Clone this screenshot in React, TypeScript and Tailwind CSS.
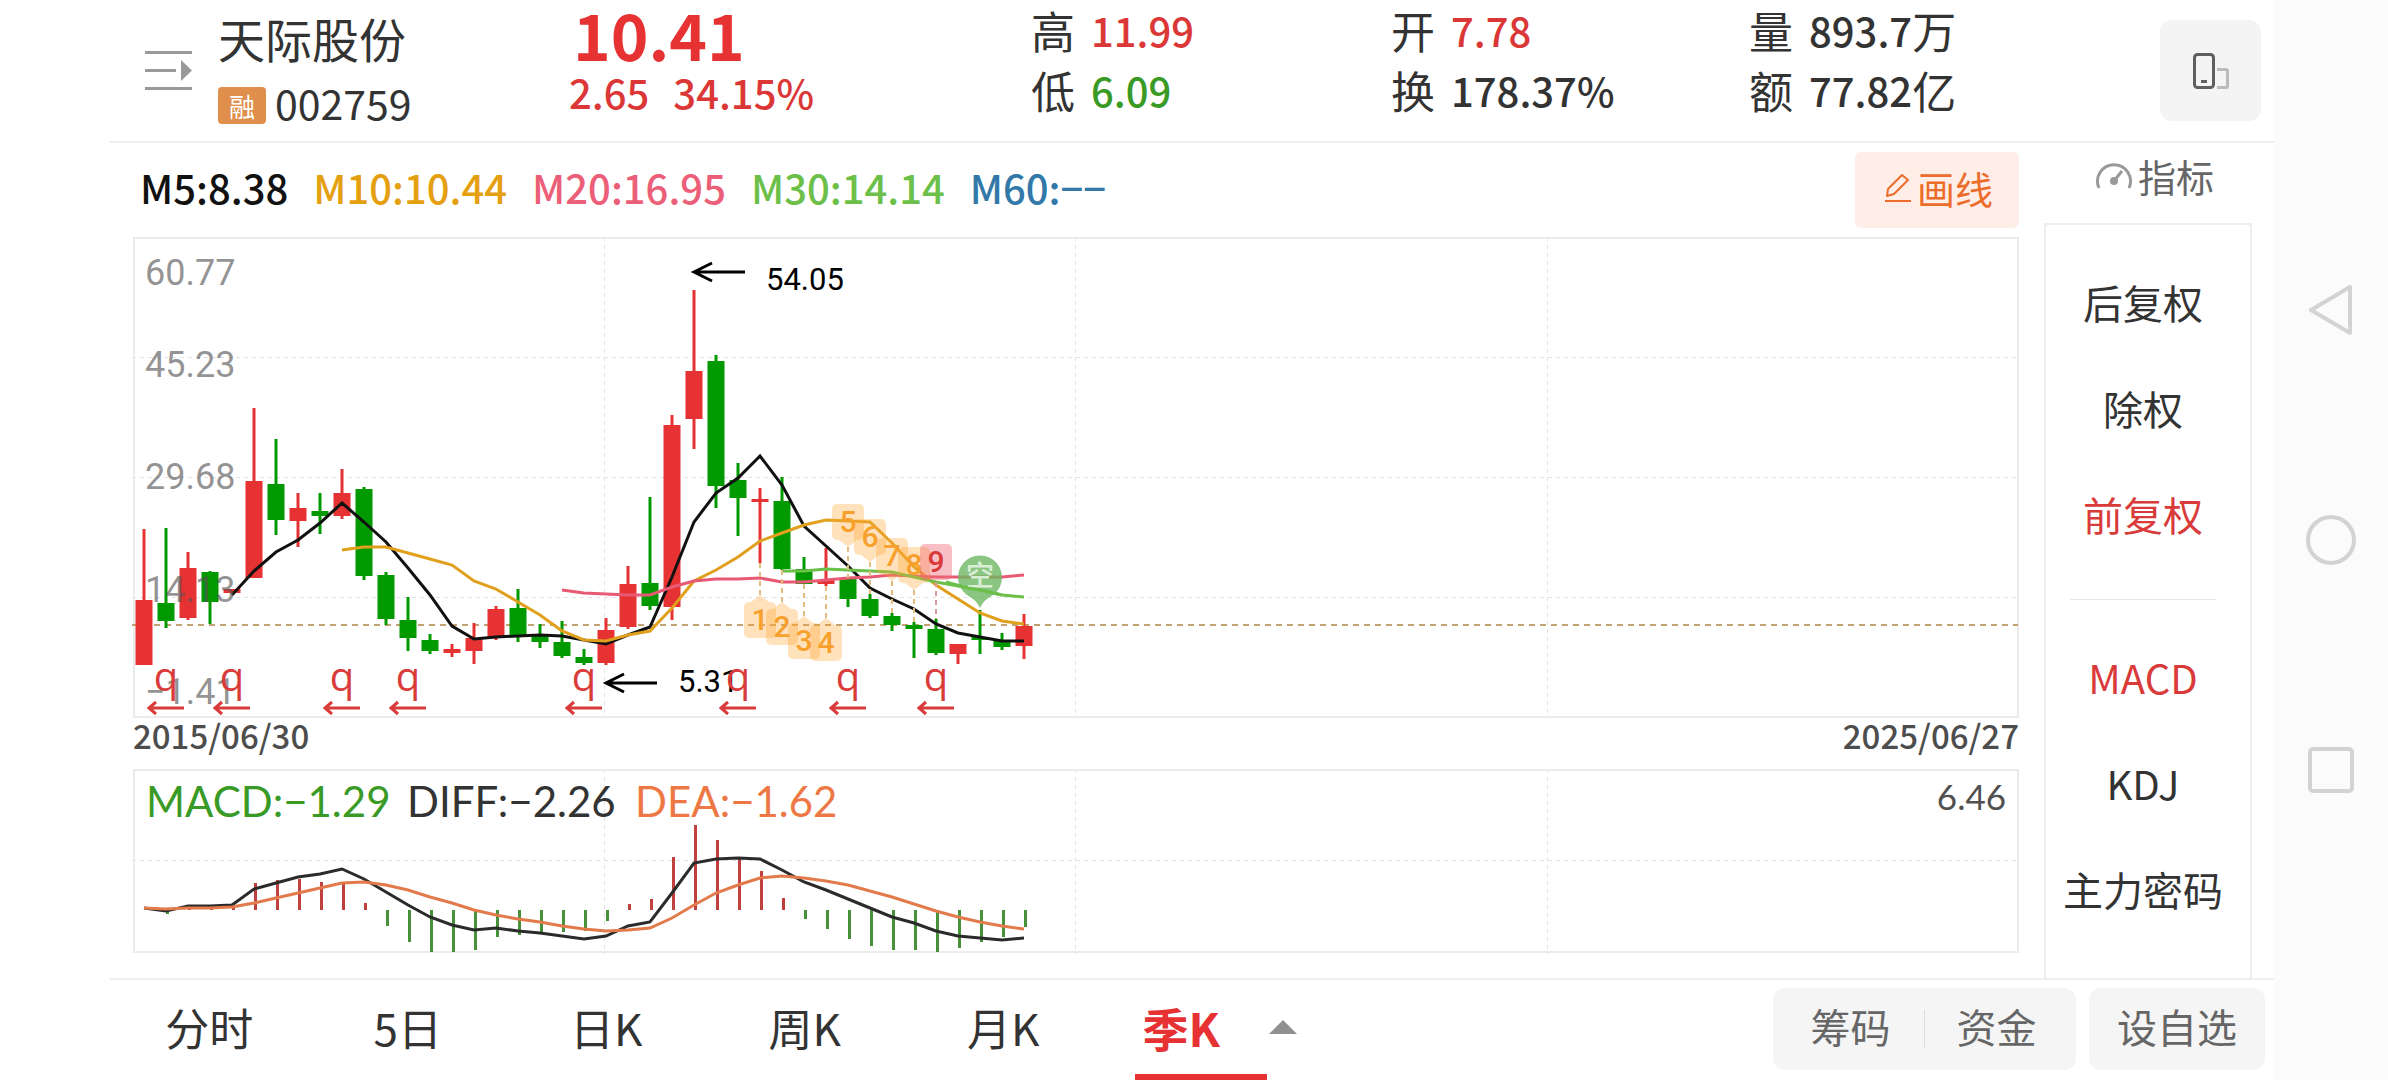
import { clsx } from "clsx";

const RED = "#e63232";
const GREEN = "#009900";

const STEP = 22; // distance between two candles
const LEFT = 12;
const cx = (i: number) => LEFT + i * STEP;

// [color, high, body top, body bottom, low]
type Candle = ["r" | "g", number, number, number, number];

const candles: Candle[] = [
  ["r", 292, 363, 428, 428],
  ["g", 291, 366, 384, 391],
  ["r", 315, 331, 381, 383],
  ["g", 334, 335, 365, 387],
  ["r", 352, 352, 356, 356],
  ["r", 171, 244, 341, 341],
  ["g", 202, 247, 283, 298],
  ["r", 256, 271, 284, 310],
  ["g", 256, 274, 279, 297],
  ["r", 232, 256, 279, 282],
  ["g", 250, 252, 339, 343],
  ["g", 335, 338, 382, 388],
  ["g", 360, 383, 401, 414],
  ["g", 397, 403, 414, 417],
  ["r", 407, 412, 416, 420],
  ["r", 386, 401, 414, 427],
  ["r", 369, 372, 401, 403],
  ["g", 352, 371, 398, 405],
  ["g", 387, 399, 405, 411],
  ["g", 384, 405, 419, 421],
  ["g", 412, 420, 426, 428],
  ["r", 381, 393, 426, 428],
  ["r", 329, 347, 390, 392],
  ["g", 260, 346, 369, 373],
  ["r", 178, 188, 370, 383],
  ["r", 53, 134, 182, 212],
  ["g", 118, 124, 249, 271],
  ["g", 226, 243, 261, 299],
  ["r", 251, 262, 265, 326],
  ["g", 240, 264, 332, 333],
  ["g", 320, 332, 347, 347],
  ["r", 311, 343, 347, 349],
  ["g", 341, 342, 362, 370],
  ["g", 357, 362, 379, 381],
  ["g", 376, 379, 388, 394],
  ["g", 385, 388, 392, 421],
  ["g", 382, 392, 416, 418],
  ["r", 407, 407, 417, 427],
  ["g", 373, 400, 403, 417],
  ["g", 396, 403, 410, 413],
  ["r", 377, 389, 409, 422],
];

const averages = [
  {
    start: 4,
    color: "#111111",
    ys: [358, 334, 315, 303, 286, 266, 285, 305, 331, 358, 389, 402, 400, 399, 398, 399, 403, 407, 398, 390, 340, 285, 256, 241, 219, 248, 289, 309, 329, 351, 362, 372, 387, 396, 400, 404, 404],
  },
  {
    start: 9,
    color: "#e0a01e",
    ys: [313, 310, 310, 316, 322, 328, 344, 352, 365, 378, 394, 403, 404, 398, 394, 371, 344, 333, 320, 304, 296, 288, 283, 284, 285, 306, 330, 348, 362, 376, 384, 387],
  },
  {
    start: 19,
    color: "#e85a73",
    ys: [353, 356, 357, 358, 358, 350, 344, 342, 342, 341, 345, 345, 343, 341, 340, 338, 339, 340, 340, 340, 340, 338],
  },
  {
    start: 29,
    color: "#6cc04a",
    ys: [334, 334, 332, 333, 334, 335, 340, 345, 349, 353, 358, 360],
  },
];

const priceLabels = [
  { text: "60.77", y: 48 },
  { text: "45.23", y: 140 },
  { text: "29.68", y: 252 },
  { text: "14.13", y: 365 },
  { text: "-1.41", y: 467 },
];

const dividends = [1, 4, 9, 12, 20, 27, 32, 36];

// countdown badges, `from` / `to` is the dotted connector
const badges = [
  { n: 1, i: 28, top: 365, from: 326, to: 358, up: true },
  { n: 2, i: 29, top: 372, from: 333, to: 365, up: true },
  { n: 3, i: 30, top: 386, from: 347, to: 379, up: true },
  { n: 4, i: 31, top: 388, from: 349, to: 381, up: true },
  { n: 5, i: 32, top: 267, from: 310, to: 341, up: false },
  { n: 6, i: 33, top: 282, from: 325, to: 357, up: false },
  { n: 7, i: 34, top: 301, from: 344, to: 376, up: false },
  { n: 8, i: 35, top: 310, from: 353, to: 385, up: false },
  { n: 9, i: 36, top: 307, from: 345, to: 382, up: false },
];

const MACD_ZERO = 141;
const macdBars = [
  141, 145, 139, 139, 139, 114, 111, 110, 113, 115, 134, 157, 173, 183, 183, 181, 168, 166, 163, 163, 162, 152, 135, 130, 88, 56, 71, 88, 102, 129, 150, 160, 170, 177, 181, 181, 183, 179, 173, 168, 158,
];
const diffLine = [
  139, 142, 137, 137, 136, 120, 114, 108, 105, 100, 110, 123, 136, 148, 156, 161, 159, 162, 164, 167, 170, 167, 157, 153, 124, 94, 90, 89, 90, 101, 113, 121, 130, 139, 148, 154, 162, 167, 169, 171, 169,
];
const deaLine = [
  139, 140, 139, 139, 138, 134, 129, 124, 119, 114, 113, 116, 121, 128, 134, 141, 146, 150, 153, 157, 160, 162, 161, 159, 149, 136, 124, 116, 109, 107, 109, 112, 116, 122, 128, 135, 142, 148, 153, 157, 160,
];

const toPoints = (ys: number[], start = 0) =>
  ys.map((y, k) => `${cx(start + k)},${y}`).join(" ");

const stats = [
  [
    { label: "高", value: "11.99", unit: "", color: "text-[#dc3737]" },
    { label: "低", value: "6.09", unit: "", color: "text-[#3a9a26]" },
  ],
  [
    { label: "开", value: "7.78", unit: "", color: "text-[#dc3737]" },
    { label: "换", value: "178.37%", unit: "", color: "text-[#333333]" },
  ],
  [
    { label: "量", value: "893.7", unit: "万", color: "text-[#333333]" },
    { label: "额", value: "77.82", unit: "亿", color: "text-[#333333]" },
  ],
];

const maLabels = [
  { text: "M5:8.38", color: "text-[#111111]" },
  { text: "M10:10.44", color: "text-[#e5a012]" },
  { text: "M20:16.95", color: "text-[#ec5f78]" },
  { text: "M30:14.14", color: "text-[#6cc04a]" },
  { text: "M60:−−", color: "text-[#3278a8]" },
];

const tabs = ["分时", "5日", "日K", "周K", "月K"];

const Header = () => (
  <header className="grid h-[143px] grid-cols-[459fr_462fr_360fr_358fr_411fr_114px] items-start border-b-2 border-[#eeeeee]">
    <div className="flex items-start pl-[35px]">
      <button type="button" aria-label="菜单" className="mt-[50px]">
        <svg width="48" height="42" viewBox="0 0 48 42" fill="#999999">
          <rect x="0" y="1" width="47" height="3" />
          <rect x="0" y="19" width="31" height="3" />
          <path d="M36 10 L47 20.500 L36 31 Z" />
          <rect x="0" y="37" width="47" height="3" />
        </svg>
      </button>
      <div className="ml-[25px]">
        <h1 className="text-[47px] leading-[76px] text-[#333333]">天际股份</h1>
        <div className="flex items-start gap-[9px]">
          <span className="mt-[11px] flex h-[37px] w-12 items-center justify-center rounded-sm bg-[#e08e4b] text-[26px] leading-none text-white">
            融
          </span>
          <span className="text-[41px] leading-[52px] text-[#333333]">002759</span>
        </div>
      </div>
    </div>

    <div className="font-medium text-[#dc3737]">
      <div className="pl-1 text-[64px] font-bold leading-[66px] text-[#e63232]">10.41</div>
      <div className="flex gap-6 text-[40px] leading-[52px]">
        <span>2.65</span>
        <span>34.15%</span>
      </div>
    </div>

    {stats.map((column, index) => (
      <dl key={index} className="text-[40px] leading-[60px]">
        {column.map((item) => (
          <div key={item.label} className="flex gap-4">
            <dt className="text-[44px] text-[#333333]">{item.label}</dt>
            <dd className={clsx("flex whitespace-nowrap font-medium", item.color)}>
              {item.value}
              {item.unit && <span className="text-[44px] font-normal">{item.unit}</span>}
            </dd>
          </div>
        ))}
      </dl>
    ))}

    <button
      type="button"
      aria-label="切换竖屏"
      className="mt-5 flex size-[101px] items-center justify-center rounded-xl bg-[#f4f4f4]"
    >
      <svg width="38" height="38" viewBox="0 0 38 38" fill="none">
        <rect x="2.500" y="2.500" width="19" height="33" rx="3" stroke="#5f5f5f" strokeWidth="3" />
        <rect x="9" y="28" width="6" height="3" fill="#5f5f5f" />
        <path d="M25 17.500 H34 a1.500 1.500 0 0 1 1.500 1.500 V34 a1.500 1.500 0 0 1 -1.500 1.500 H25" stroke="#bbbbbb" strokeWidth="3" />
      </svg>
    </button>
  </header>
);

const Arrow = ({ x, y }: { x: number; y: number }) => (
  <path
    d={`M${x + 51} ${y} H${x} M${x + 18} ${y - 9} L${x} ${y} L${x + 18} ${y + 9}`}
    stroke="#000000"
    strokeWidth="3"
    fill="none"
  />
);

const GridLines = ({ height, rows }: { height: number; rows: number[] }) => (
  <g stroke="#e2e2e2" strokeDasharray="4 4">
    {[472, 943, 1415].map((x) => (
      <line key={x} x1={x + 0.5} x2={x + 0.5} y1="0" y2={height} />
    ))}
    {rows.map((y) => (
      <line key={y} x1="0" x2="1886" y1={y + 0.5} y2={y + 0.5} />
    ))}
  </g>
);

const PriceChart = () => (
  <svg
    viewBox="0 0 1887 481"
    className="block h-auto w-full font-[Roboto,'Noto_Sans_CJK_SC',sans-serif]"
    role="img"
    aria-label="季K线"
  >
    <GridLines height={481} rows={[120, 240, 360]} />
    <rect x="2" y="1" width="1884" height="479" fill="none" stroke="#ebebeb" strokeWidth="2" />
    <line x1="0" x2="1886" y1="388" y2="388" stroke="#c2a273" strokeWidth="2" strokeDasharray="6 5" />

    {candles.map(([color, high, top, bottom, low], i) => {
      const fill = color === "r" ? RED : GREEN;
      return (
        <g key={i} fill={fill}>
          <rect x={cx(i) - 1.5} y={high} width="3" height={low - high} />
          <rect x={cx(i) - 8.5} y={top} width="17" height={bottom - top} />
        </g>
      );
    })}

    {averages.map((line) => (
      <polyline
        key={line.color}
        points={toPoints(line.ys, line.start)}
        fill="none"
        stroke={line.color}
        strokeWidth="3"
      />
    ))}

    <g fill="#555555" fillOpacity="0.65" fontSize="36">
      {priceLabels.map((label) => (
        <text key={label.text} x="13" y={label.y}>
          {label.text.replace("-", "−")}
        </text>
      ))}
    </g>

    <Arrow x={562} y={35} />
    <text x="634" y="53" fontSize="31">54.05</text>
    <Arrow x={474} y={446} />
    <text x="546" y="455" fontSize="31">5.31</text>

    {dividends.map((i) => (
      <g key={i}>
        <text
          x={cx(i)}
          y="454"
          fontSize="40"
          textAnchor="middle"
          fill="#d93a3a"
          className="font-['Open_Sans',sans-serif] font-medium"
        >
          q
        </text>
        <path
          d={`M${cx(i) + 18} 471 H${cx(i) - 17} M${cx(i) - 10} 465 L${cx(i) - 17} 471 L${cx(i) - 10} 477`}
          fill="none"
          stroke="#d93a3a"
          strokeWidth="3"
        />
      </g>
    ))}

    {badges.map(({ n, i, top, from, to, up }) => {
      const x = cx(i);
      const hot = n === 9;
      return (
        <g key={n}>
          <line x1={x} x2={x} y1={from} y2={to} stroke={hot ? "#d99a9a" : "#e3bd80"} strokeWidth="2" strokeDasharray="5 4" />
          <g fill={hot ? "#ee6a72" : "#ffa733"} fillOpacity={hot ? 0.42 : 0.33}>
            <rect x={x - 16} y={top} width="32" height="36" rx="5" />
            {!hot && up && <path d={`M${x - 9} ${top} L${x} ${top - 7} L${x + 9} ${top} Z`} />}
            {!hot && !up && <path d={`M${x - 9} ${top + 36} L${x} ${top + 43} L${x + 9} ${top + 36} Z`} />}
          </g>
          <text x={x} y={top + 28} fontSize="30" fontWeight="500" textAnchor="middle" fill={hot ? "#d93a3a" : "#f7a02c"}>
            {n}
          </text>
        </g>
      );
    })}

    <g>
      <path
        d="M848 371 C845 365 843 363 838 360 A22 22 0 1 1 858 360 C853 363 851 365 848 371 Z"
        fill="#6db862"
        fillOpacity="0.8"
      />
      <text x="848" y="349" fontSize="28" fontWeight="500" textAnchor="middle" fill="#d9eed6">
        空
      </text>
      <polyline points="814,345 836,351 848,353 870,358" fill="none" stroke="#6cc04a" strokeWidth="3" />
    </g>
  </svg>
);

const MacdChart = () => (
  <svg
    viewBox="0 0 1887 185"
    className="block h-auto w-full font-[Lato,'Noto_Sans_CJK_SC',sans-serif]"
    role="img"
    aria-label="MACD"
  >
    <GridLines height={185} rows={[91]} />
    <rect x="2" y="1" width="1884" height="182" fill="none" stroke="#ebebeb" strokeWidth="2" />
    {macdBars.map((y, i) => (
      <rect
        key={i}
        x={cx(i)}
        y={Math.min(y, MACD_ZERO)}
        width="3"
        height={Math.abs(y - MACD_ZERO)}
        fill={y < MACD_ZERO ? "#c04040" : "#46913a"}
      />
    ))}
    <polyline points={toPoints(diffLine)} fill="none" stroke="#2b2b2b" strokeWidth="3" />
    <polyline points={toPoints(deaLine)} fill="none" stroke="#e27a4c" strokeWidth="3" />
    <g fontSize="42">
      <text x="14" y="48" fill="#3a9a26">MACD:−1.29</text>
      <text x="275" y="48" fill="#333333">DIFF:−2.26</text>
      <text x="503" y="48" fill="#ee7844">DEA:−1.62</text>
    </g>
    <text x="1874" y="41" fontSize="35" textAnchor="end" fill="#505050">6.46</text>
  </svg>
);

const SideButton = ({ text, active = false }: { text: string; active?: boolean }) => (
  <button
    type="button"
    className={clsx(
      "block h-[106px] w-full whitespace-nowrap text-[40px] leading-none",
      active ? "text-[#d93a3a]" : "text-[#333333]"
    )}
  >
    {text}
  </button>
);

const SidePanel = () => (
  <aside className="flex w-52 shrink-0 flex-col">
    <button type="button" className="flex h-20 items-center justify-center gap-1 pb-4 pl-3 text-[38px] text-[#666666]">
      <svg width="40" height="32" viewBox="0 0 40 32" fill="none" stroke="#999999">
        <path d="M5 29 A16.500 16.500 0 1 1 35 29" strokeWidth="3" />
        <path d="M20 22 L28 12" strokeWidth="3" />
        <circle cx="20" cy="22" r="4" fill="#999999" stroke="none" />
      </svg>
      指标
    </button>
    <div className="flex-1 border-2 border-b-0 border-[#eeeeee] pr-2.5 pt-6">
      <SideButton text="后复权" />
      <SideButton text="除权" />
      <SideButton text="前复权" active />
      <hr className="mx-6 mb-6 mt-8 border-[#e6e6e6]" />
      <SideButton text="MACD" active />
      <SideButton text="KDJ" />
      <SideButton text="主力密码" />
    </div>
  </aside>
);

const BottomBar = () => (
  <footer className="flex h-[102px] border-t-2 border-[#eeeeee]">
    <nav className="flex flex-[1192_1_0%] text-[44px] leading-none text-[#333333]">
      {tabs.map((tab) => (
        <button type="button" key={tab} className="flex-1 whitespace-nowrap pb-1.5">
          {tab}
        </button>
      ))}
      <button type="button" className="relative flex flex-1 items-center whitespace-nowrap pb-1.5 text-[46px] font-bold text-[#e63232]">
        <span className="ml-10">季K</span>
        <span className="absolute bottom-0 left-8 h-1.5 w-[132px] bg-[#e63232]" />
      </button>
      <button type="button" aria-label="更多周期" className="-ml-8 flex items-center pb-1.5">
        <svg width="28" height="14" viewBox="0 0 28 14" fill="#909090">
          <path d="M14 0 L28 14 H0 Z" />
        </svg>
      </button>
    </nav>
    <div className="flex flex-[972_1_0%] justify-end gap-[13px] pr-[9px] pt-2 text-[40px] leading-none text-[#666666]">
      <div className="flex h-[82px] items-center rounded-xl bg-[#f5f5f5]">
        <button type="button" className="h-full w-[151px] pb-1.5 pl-1">筹码</button>
        <span className="h-[38px] w-px bg-[#dddddd]" />
        <button type="button" className="h-full w-[151px] pb-1.5 pr-2">资金</button>
      </div>
      <button type="button" className="h-[82px] w-[176px] rounded-xl bg-[#f5f5f5] pb-1.5">
        设自选
      </button>
    </div>
  </footer>
);

const SystemNav = () => (
  <nav className="flex w-[114px] shrink-0 flex-col items-center justify-center gap-[180px] bg-[#fbfbfb]">
    <button type="button" aria-label="返回">
      <svg width="50" height="50" viewBox="0 0 50 50" fill="none" stroke="#d3d3d3" strokeWidth="4" strokeLinejoin="round">
        <path d="M44 2 V48 L5 25 Z" />
      </svg>
    </button>
    <button type="button" aria-label="主页">
      <svg width="50" height="50" viewBox="0 0 50 50" fill="none" stroke="#d3d3d3" strokeWidth="4">
        <circle cx="25" cy="25" r="23" />
      </svg>
    </button>
    <button type="button" aria-label="最近任务">
      <svg width="50" height="50" viewBox="0 0 50 50" fill="none" stroke="#d3d3d3" strokeWidth="4">
        <rect x="4" y="4" width="42" height="42" rx="3" />
      </svg>
    </button>
  </nav>
);

const App = () => {
  return (
    <div className="flex min-h-screen bg-white font-['Noto_Sans_CJK_SC',sans-serif]">
      <div className="flex min-w-0 flex-1 flex-col pl-[110px]">
        <Header />
        <main className="flex flex-1 gap-[25px] px-[22px]">
          <section className="min-w-0 flex-1">
            <div className="flex items-center justify-between py-[9px] pl-2">
              <div className="flex gap-[25px] pb-1.5 text-[40px] font-medium leading-none">
                {maLabels.map((label) => (
                  <span key={label.text} className={label.color}>
                    {label.text}
                  </span>
                ))}
              </div>
              <button
                type="button"
                className="flex h-[76px] w-[164px] items-center justify-center gap-1.5 rounded-md bg-[#ffeee8] pb-1 pl-1 text-[38px] leading-none text-[#ec6c2b]"
              >
                <svg width="26" height="30" viewBox="0 0 26 30" fill="none" stroke="#ec6c2b" strokeWidth="2">
                  <path d="M3 16 L17 2 L23 7 L9 21 L2 23 Z" strokeLinejoin="round" />
                  <path d="M0 28 H26" />
                </svg>
                画线
              </button>
            </div>
            <PriceChart />
            <div className="flex h-[51px] justify-between pl-px text-[33px] font-medium leading-[34px] text-[#4d4d4d]">
              <time>2015/06/30</time>
              <time>2025/06/27</time>
            </div>
            <MacdChart />
          </section>
          <SidePanel />
        </main>
        <BottomBar />
      </div>
      <SystemNav />
    </div>
  );
};

export default App;
